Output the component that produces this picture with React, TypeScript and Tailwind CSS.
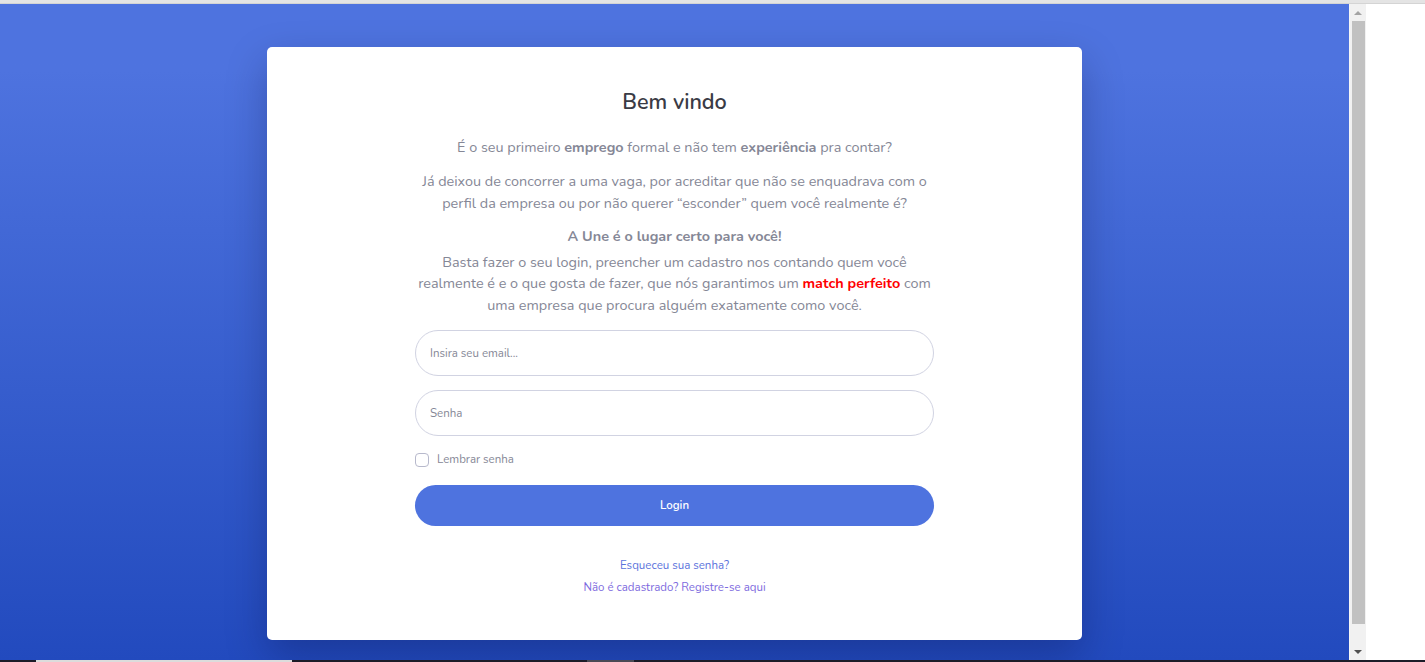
import React from 'react'

const font = { fontFamily: 'Nunito, Lato, "Open Sans", sans-serif' }

const App = () => {
	return (
		<div className="h-[662px] w-[1425px] flex flex-col overflow-hidden bg-white" style={font}>
			<div className="h-[4px] bg-[#e4e4e4] border-b border-b-[#d4d4d4]" />
			<div className="flex flex-1">
				<div className="w-[1349px] bg-gradient-to-b from-[#4e73df] from-10% to-[#224abe] flex justify-center pt-[43px]">
					<div className="w-[815px] h-[593px] bg-white rounded-[5px] shadow-[0_16px_40px_rgba(0,0,40,0.25)] px-[148px] pt-[42px]">
						<h1 className="text-center text-[21.6px] leading-[26px] text-[#3a3b45] font-semibold mb-[22px]">Bem vindo</h1>
						<div className="text-center text-[14.4px] leading-[21.3px] text-[#858796]">
							<p className="mb-[13px]">
								É o seu primeiro <b className="font-bold">emprego</b> formal e não tem <b className="font-bold">experiência</b> pra contar?
							</p>
							<p className="mb-[12px]">
								Já deixou de concorrer a uma vaga, por acreditar que não se enquadrava com o<br />
								perfil da empresa ou por não querer “esconder” quem você realmente é?
							</p>
							<p className="font-bold mb-[5px]">A Une é o lugar certo para você!</p>
							<p>
								Basta fazer o seu login, preencher um cadastro nos contando quem você<br />
								realmente é e o que gosta de fazer, que nós garantimos um <b className="font-bold text-[#ff0000]">match perfeito</b> com<br />
								uma empresa que procura alguém exatamente como você.
							</p>
						</div>
						<form className="mt-[14px] flex flex-col" onSubmit={e => e.preventDefault()}>
							<input
								type="email"
								placeholder="Insira seu email..."
								className="h-[46px] rounded-full border border-[#d1d3e2] px-[14px] text-[11.5px] text-[#6e707e] placeholder:text-[#858796] outline-none"
							/>
							<input
								type="password"
								placeholder="Senha"
								className="mt-[14px] h-[46px] rounded-full border border-[#d1d3e2] px-[14px] text-[11.5px] text-[#6e707e] placeholder:text-[#858796] outline-none"
							/>
							<label className="mt-[15px] flex items-center gap-[8px] text-[11.5px] leading-[17px] text-[#858796]">
								<span className="w-[14px] h-[14px] rounded-[4px] border border-[#b7b9cc] bg-white" />
								Lembrar senha
							</label>
							<button
								type="submit"
								className="mt-[17px] h-[41px] rounded-full bg-[#4e73df] text-white text-[11.5px] font-semibold"
							>
								Login
							</button>
						</form>
						<div className="mt-[28px] flex flex-col items-center text-[11.5px] leading-[22px]">
							<a href="#" className="text-[#5a72dc]">Esqueceu sua senha?</a>
							<a href="#" className="text-[#7d6ade]">Não é cadastrado? Registre-se aqui</a>
						</div>
					</div>
				</div>
				<div className="w-[1px] bg-[#f6f6f6]" />
				<div className="w-[16px] bg-[#f1f1f1] flex flex-col items-center">
					<div className="h-[17px] flex items-center justify-center">
						<div className="w-0 h-0 border-l-[4px] border-r-[4px] border-b-[4px] border-l-transparent border-r-transparent border-b-[#a3a3a3]" />
					</div>
					<div className="w-[13px] flex-1 bg-[#c1c1c1]" />
					<div className="h-[36px] flex items-end justify-center pb-[6px]">
						<div className="w-0 h-0 border-l-[4px] border-r-[4px] border-t-[4px] border-l-transparent border-r-transparent border-t-[#505050]" />
					</div>
				</div>
				<div className="flex-1 bg-white" />
			</div>
			<div className="h-[2px] bg-[#1c1c28] flex">
				<div className="ml-[36px] w-[256px] bg-[#dcdcdc]" />
				<div className="ml-[295px] w-[47px] bg-[#4a4a55]" />
			</div>
		</div>
	)
}

export default App
